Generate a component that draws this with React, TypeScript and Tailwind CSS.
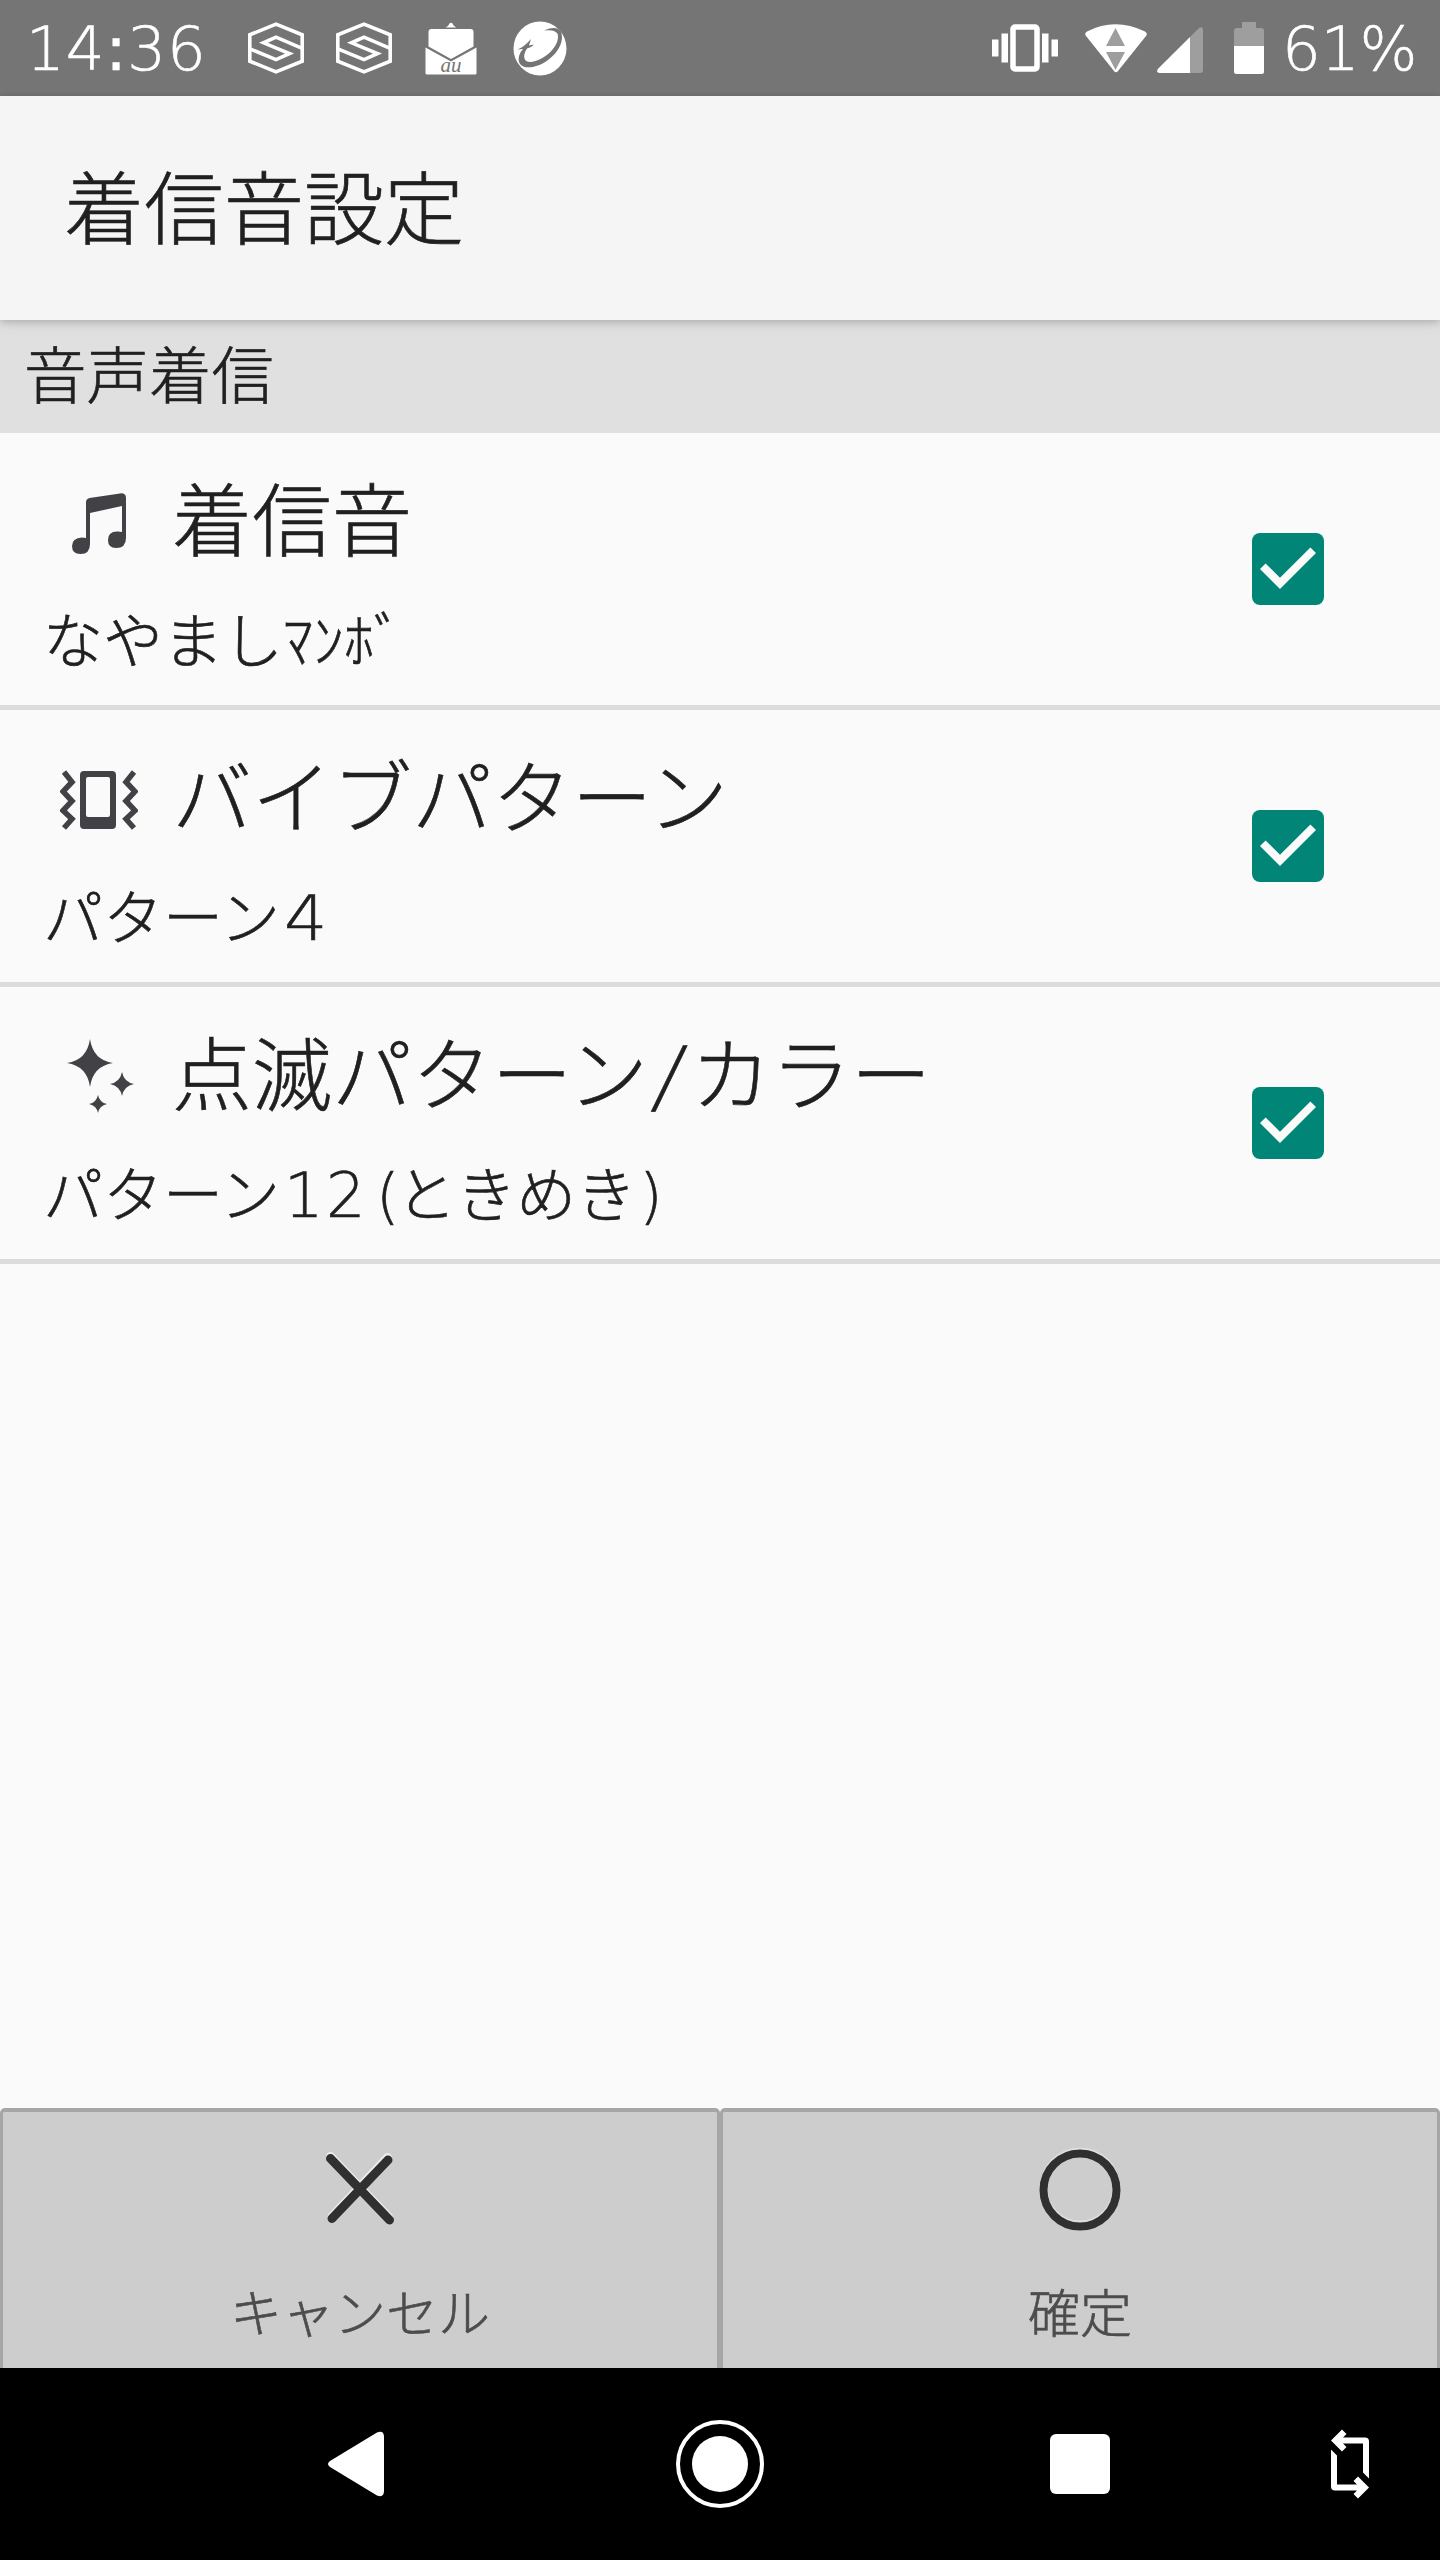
import React from "react";

function CarrierBadge() {
  return (
    <svg width="56" height="52" viewBox="0 0 56 52" fill="none" stroke="#fff" strokeWidth="3.6">
      <path d="M28 2.2 54.2 12.8V39.2L28 49.8 1.8 39.2V12.8Z" />
      <path d="M54.2 26.3 28 15.2 15.5 20.8 41.5 31.6 28 37.6 1.8 26.8" />
    </svg>
  );
}

function MailBadge() {
  return (
    <svg className="overflow-visible" width="52" height="53" viewBox="0 0 52 53" fill="#fff">
      <path d="M20.5 5.5q3-1 4-4 1.500-1.500 3 0 1 3 4 4Z" />
      <path d="M6.500 7h39q3 0 3 3v14.500L26 37 3.500 24.500V10q0-3 3-3Z" />
      <path d="M.5 25.500 26 39.500 51.500 25.500V51q0 1.500-1.500 1.500H2Q.5 52.500.5 51Z" />
      <text x="26" y="49.500" textAnchor="middle" fontSize="21" fontStyle="italic" fill="#757575" fontFamily="Liberation Serif, serif">au</text>
    </svg>
  );
}

function SwirlBadge() {
  return (
    <svg width="54" height="55" viewBox="0 0 54 55">
      <ellipse cx="27" cy="27.500" rx="26.500" ry="27" fill="#fff" />
      <path
        d="M31 9.500Q44 4 48 11C53 24 38 42 20 46 10 47.500 4 44 6 35Q7 31 10 28L4.500 28.500Q11 26 18 18L16 24.500 21 23.500Q18 27 14 27.500C9 35 11 41 17 41 32 40 48 24 44.500 12.500Q41 8 31 9.500Z"
        fill="#757575"
      />
    </svg>
  );
}

function StatusBar() {
  return (
    <header className="flex h-24 items-center bg-[#757575] text-[60px] leading-none text-white">
      <span className="ml-[26px] w-[222px] font-[DejaVu_Sans] text-[61px] font-extralight tracking-[1px]">
        14<span className="font-normal">:</span>36
      </span>
      <CarrierBadge />
      <div className="ml-8"><CarrierBadge /></div>
      <div className="ml-[33px]"><MailBadge /></div>
      <div className="ml-9"><SwirlBadge /></div>
      <div className="ml-auto flex items-center">
        <svg width="66" height="48" viewBox="0 0 66 48" fill="#fff">
          <path d="M0 15.500h6.500v17H0ZM9.500 9.500H16v29H9.500ZM50 9.500h6.500v29H50ZM59.500 15.500H66v17h-6.500Z" />
          <rect x="21" y="3" width="24" height="42" rx="2" fill="none" stroke="#fff" strokeWidth="5.500" />
        </svg>
        <svg className="ml-[27px]" width="62" height="49" viewBox="0 0 62 49">
          <path d="M1 12Q-1 9.500 2 7.500 30-7 60 7.500 63 9.500 61 12L33 47Q31 49.500 29 47Z" fill="#fff" />
          <path d="M30.500 4 40 22H21ZM21 28h19L30.500 46Z" fill="#9e9e9e" />
        </svg>
        <svg className="mt-1 ml-[10px]" width="46" height="46" viewBox="0 0 46 46">
          <path d="M42 1q4-2 4 2v40q0 3-3 3H33V10Z" fill="#9e9e9e" />
          <path d="M33 10v36H2.500Q-1 46 .8 42Z" fill="#fff" />
        </svg>
        <svg className="ml-[31px]" width="30" height="52" viewBox="0 0 30 52">
          <path d="M8 0h14v6h5q3 0 3 3v15H0V9q0-3 3-3h5Z" fill="#9e9e9e" />
          <path d="M0 24h30v25.500q0 2.500-2.500 2.500h-25Q0 52 0 49.500Z" fill="#fff" />
        </svg>
        <span className="ml-[18px] w-[158px] font-[DejaVu_Sans] text-[61px] font-extralight">61%</span>
      </div>
    </header>
  );
}

function MusicIcon() {
  return (
    <svg className="ml-3" width="54" height="61" viewBox="0 0 54 61" fill="#424146">
      <path d="M14 9Q14 6 17.500 5L48 .4Q54-.2 54 5V45Q54 55 44 55 36 55 36 47 36 38 46 38.500L50 39V13L18 20V51Q18 61 8.500 61 0 61 0 53 0 45 10 44.500L14 45Z" />
    </svg>
  );
}

function VibrateIcon() {
  return (
    <svg width="78" height="60" viewBox="0 0 78 60">
      <path fillRule="evenodd" d="M24 1h28q4 0 4 4v50q0 4-4 4H24q-4 0-4-4V5q0-4 4-4ZM28 7q-2 0-2 2v36q0 2 2 2h20q2 0 2-2V9q0-2-2-2Z" fill="#424146" />
      <path d="M4 2 12 12 3 21.500 12 31 3 40.500 12 49 4 58M74 2 66 12 75 21.500 66 31 75 40.500 66 49 74 58" fill="none" stroke="#424146" strokeWidth="5.500" />
    </svg>
  );
}

function SparkleIcon() {
  return (
    <svg className="ml-[7px]" width="67" height="76" viewBox="0 0 67 76" fill="#424146">
      <path d="M23 0Q26 21 46 24 26 27 23 48 20 27 0 24 20 21 23 0ZM55 33Q57 43 67 45 57 47 55 57 53 47 43 45 53 43 55 33ZM31 56Q32.500 63.500 40 65 32.500 66.500 31 74 29.500 66.500 22 65 29.500 63.500 31 56Z" />
    </svg>
  );
}

function Checkbox() {
  return (
    <svg width="72" height="72" viewBox="0 0 72 72">
      <rect width="72" height="72" rx="8" fill="#008577" />
      <path d="M8 36 13.600 30.400 28 44.800 58.400 14.400 64 20 28 56Z" fill="#fafafa" />
    </svg>
  );
}

type SettingProps = { icon: React.ReactNode; title: React.ReactNode; children: React.ReactNode };

function Setting({ icon, title, children }: SettingProps) {
  return (
    <li className="flex h-[277px] items-center border-b-[5px] border-[#dcdcdc] pr-[116px] text-[#202020]">
      <div className="flex-1 pt-[22px] whitespace-nowrap">
        <div className="flex h-[90px] items-center">
          <div className="ml-[60px] w-[112px]">{icon}</div>
          <span className="text-[80px] leading-[90px]">{title}</span>
        </div>
        <p className="mt-[34px] ml-[43px] h-[80px] text-[60px] leading-[80px]">{children}</p>
      </div>
      <Checkbox />
    </li>
  );
}

function ActionButton({ icon, label }: { icon: React.ReactNode; label: string }) {
  return (
    <button className="flex flex-1 flex-col items-center rounded-t-[5px] border-x-[3px] border-t-4 border-[#a6a6a6] bg-[#cdcdcd] text-[52px] leading-[60px] text-[#4c4c4c]">
      <span className="mt-[35px] h-[84px]">{icon}</span>
      <span className="mt-[54px]">{label}</span>
    </button>
  );
}

export default function App() {
  return (
    <div className="flex h-[2560px] w-[1440px] flex-col overflow-hidden bg-[#fafafa] font-['DejaVu_Sans','Noto_Sans_CJK_JP',sans-serif] font-light [-webkit-text-stroke-width:0.6px]">
      <StatusBar />
      <div className="z-10 flex h-56 items-center bg-[#f5f5f5] pt-1.5 pl-16 text-[80px] leading-none text-[#202020] shadow-[0_2px_8px_rgba(0,0,0,0.2),0_6px_14px_rgba(0,0,0,0.04)]">
        <h1>着信音設定</h1>
      </div>
      <h2 className="flex h-[113px] items-center bg-[#e0e0e0] pt-1 pl-6 text-[62.5px] leading-none text-[#202020]">音声着信</h2>
      <ul>
        <Setting icon={<MusicIcon />} title="着信音">
          なやまし<span className="tracking-[0.5px]">ﾏﾝﾎﾞ</span>
        </Setting>
        <Setting icon={<VibrateIcon />} title="バイブパターン">
          パターン<span className="ml-1 inline-block origin-left scale-x-110 text-[62px] leading-none">4</span>
        </Setting>
        <Setting
          icon={<SparkleIcon />}
          title={
            <>
              点滅パターン<span className="mx-2 inline-block -skew-x-10 font-extralight">/</span>カラー
            </>
          }
        >
          パターン<span className="ml-1 text-[62px] leading-none tracking-[2.500px]">12</span>
          <span className="mr-[-3px] ml-2">(</span>ときめき<span className="ml-[3px]">)</span>
        </Setting>
      </ul>
      <footer className="mt-auto">
        <div className="flex h-[260px]">
          <ActionButton
            label="キャンセル"
            icon={
              <svg width="72" height="84" viewBox="0 0 72 84" fill="none" strokeWidth="9" strokeLinecap="round">
                <path d="M6.500 9.500 64.500 70M63.500 10.500 8 69.500" stroke="#ececec" />
                <path d="M6.500 11.500 65.500 73M64 13 8 71.500" stroke="#303030" />
              </svg>
            }
          />
          <ActionButton
            label="確定"
            icon={
              <svg width="84" height="84" viewBox="0 0 84 84" fill="none" strokeWidth="8">
                <circle cx="42" cy="41" r="36.500" stroke="#dedede" />
                <circle cx="42" cy="43" r="36.500" stroke="#303030" />
              </svg>
            }
          />
        </div>
        <nav className="flex h-48 items-center bg-black">
          <svg className="ml-[328px]" width="56" height="70" viewBox="0 -3 56 70" fill="#fff">
            <path d="M2 29 49 .5Q56-2 56 5V59Q56 66 49 63.500L2 35Q-2 32 2 29Z" />
          </svg>
          <svg className="ml-[292px]" width="88" height="88" viewBox="0 0 88 88">
            <circle cx="44" cy="44" r="42" fill="none" stroke="#fff" strokeWidth="4" />
            <circle cx="44" cy="44" r="28" fill="#fff" />
          </svg>
          <div className="ml-[286px] size-[60px] rounded-md bg-white" />
          <svg className="ml-[221px]" width="38" height="70" viewBox="0 0 38 70" fill="#fff">
            <path d="M0 11.500 11 .5 15.500 5 12 8.500H34q4 0 4 4V49.500L32 43.500V14.500H12L15.500 18 11 22.500ZM0 20.500 6 26.500V55.500H26L22.500 52 27 47.500 38 58.500 27 69.500 22.500 65 26 61.500H4q-4 0-4-4Z" />
          </svg>
        </nav>
      </footer>
    </div>
  );
}
